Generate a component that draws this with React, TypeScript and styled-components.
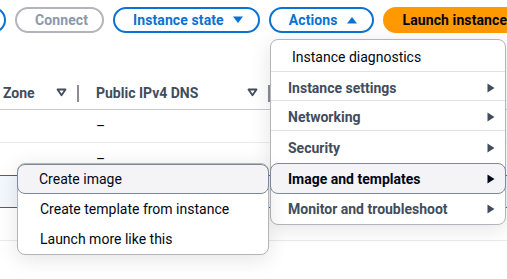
import React from "react";
import styled, { createGlobalStyle } from "styled-components";

const Global = createGlobalStyle`
  html, body { margin: 0; padding: 0; background: #ffffff; overflow: hidden; }
  body { font-family: Roboto, "Open Sans", "Noto Sans", sans-serif; font-size: 14px; color: #000716; }
  * { box-sizing: border-box; }
`;

const Page = styled.div`
  position: relative;
  width: 507px;
  height: 279px;
  overflow: hidden;
  background: #fff;
`;

const Toolbar = styled.div`
  display: flex;
  align-items: center;
  gap: 9px;
  height: 26px;
  margin: 7px 0 0 -28px;
  white-space: nowrap;
`;

const Btn = styled.button<{ $variant?: "normal" | "disabled" | "primary" }>`
  flex: none;
  display: inline-flex;
  align-items: center;
  gap: 8px;
  height: 26px;
  padding: 0 14px 0 18px;
  border-radius: 20px;
  border: 2px solid
    ${(p) => (p.$variant === "disabled" ? "#b4b4bb" : p.$variant === "primary" ? "#ff9900" : "#0972d3")};
  background: ${(p) => (p.$variant === "primary" ? "#ff9900" : "#ffffff")};
  color: ${(p) => (p.$variant === "disabled" ? "#8d99a8" : p.$variant === "primary" ? "#000716" : "#0972d3")};
  font-family: inherit;
  font-weight: 700;
  font-size: 14px;
  letter-spacing: 0.1px;
  line-height: 1;
`;

const IconBtn = styled(Btn)`
  width: 34px;
  padding: 0;
  justify-content: center;
`;

const Caret = ({ up }: { up?: boolean }) => (
  <svg width="12" height="8" viewBox="0 0 12 8">
    <path d={up ? "M1 7.5 L6 1 L11 7.5 Z" : "M1 0.5 L11 0.5 L6 7 Z"} fill="currentColor" />
  </svg>
);

const Table = styled.div`
  margin-top: 43px;
  display: flex;
  flex-direction: column;
`;

const HeaderRow = styled.div`
  display: grid;
  grid-template-columns: 77px 191px 1fr;
  height: 34px;
  align-items: center;
  border-bottom: 1px solid #c6c6cd;
`;

const HeadCell = styled.div<{ $sep?: boolean }>`
  display: flex;
  align-items: center;
  justify-content: space-between;
  height: 100%;
  padding: 0 10px 0 ${(p) => (p.$sep ? "17px" : "3px")};
  border-left: ${(p) => (p.$sep ? "2px solid #8c8c94" : "none")};
  font-weight: 700;
  color: #414d5c;
  ${(p) => (p.$sep ? "border-image: linear-gradient(to bottom, transparent 9px, #8c8c94 9px, #8c8c94 25px, transparent 25px) 1;" : "")}
`;

const Filter = () => (
  <svg width="11" height="9" viewBox="0 0 11 9">
    <path d="M1.5 1.5 H9.5 L5.5 7.3 Z" fill="none" stroke="#414d5c" strokeWidth="1.8" strokeLinejoin="round" />
  </svg>
);

const Row = styled.div<{ $selected?: boolean }>`
  display: grid;
  grid-template-columns: 77px 191px 1fr;
  height: 33px;
  align-items: center;
  background: ${(p) => (p.$selected ? "#f2f8fd" : "#fff")};
  border-bottom: 1px solid ${(p) => (p.$selected ? "#0972d3" : "#e9ebed")};
  ${(p) => (p.$selected ? "border-top: 1px solid #0972d3; margin-top: -1px;" : "")}
`;

const Cell = styled.div`
  padding-left: 19px;
  color: #000716;
`;

const Menu = styled.div<{ $left: number; $top: number; $width: number }>`
  position: absolute;
  left: ${(p) => p.$left}px;
  top: ${(p) => p.$top}px;
  width: ${(p) => p.$width}px;
  background: #fff;
  border: 1px solid #b4b4bb;
  border-radius: 8px;
  box-shadow: 0 4px 20px 1px rgba(0, 7, 22, 0.1);
  display: flex;
  flex-direction: column;
`;

const Item = styled.div<{ $bold?: boolean; $active?: boolean; $h?: number; $indent?: number; $divider?: boolean }>`
  position: relative;
  display: flex;
  align-items: center;
  justify-content: space-between;
  height: ${(p) => p.$h ?? 30}px;
  padding: 0 10px 0 ${(p) => p.$indent ?? 17}px;
  margin: 0 -1px;
  font-weight: ${(p) => (p.$bold ? 700 : 400)};
  color: ${(p) => (p.$active ? "#000716" : p.$bold ? "#414d5c" : "#000716")};
  background: ${(p) => (p.$active ? "#f4f4f6" : "transparent")};
  border: 1px solid ${(p) => (p.$active ? "#7d8998" : "transparent")};
  border-radius: ${(p) => (p.$active ? "8px" : "0")};
  box-shadow: ${(p) => (p.$divider ? "inset 0 -1px 0 #e0e2e5" : "none")};
  z-index: ${(p) => (p.$active ? 1 : 0)};
`;

const Arrow = ({ dark }: { dark?: boolean }) => (
  <svg width="8" height="10" viewBox="0 0 8 10">
    <path d="M0.5 0.5 L7.5 5 L0.5 9.5 Z" fill={dark ? "#000716" : "#414d5c"} />
  </svg>
);

const RefreshIcon = () => (
  <svg width="16" height="16" viewBox="0 0 16 16">
    <path d="M10 5h3V2M12.9 5A6 6 0 1 0 14 8" fill="none" stroke="#0972d3" strokeWidth="2" />
  </svg>
);

export default function App() {
  return (
    <Page>
      <Global />
      <Toolbar>
        <IconBtn>
          <RefreshIcon />
        </IconBtn>
        <Btn $variant="disabled">Connect</Btn>
        <Btn>
          Instance state <Caret />
        </Btn>
        <Btn>
          Actions <Caret up />
        </Btn>
        <Btn $variant="primary">Launch instance</Btn>
      </Toolbar>
      <Table>
        <HeaderRow>
          <HeadCell>
            Zone <Filter />
          </HeadCell>
          <HeadCell $sep>
            Public IPv4 DNS <Filter />
          </HeadCell>
          <HeadCell $sep />
        </HeaderRow>
        <Row>
          <div />
          <Cell>–</Cell>
          <div />
        </Row>
        <Row>
          <div />
          <Cell>–</Cell>
          <div />
        </Row>
        <Row $selected>
          <div />
          <Cell />
          <div />
        </Row>
        <Row>
          <div />
          <Cell />
          <div />
        </Row>
      </Table>

      <Menu $left={270} $top={39} $width={236}>
        <Item $h={33} $indent={21} $divider>
          Instance diagnostics
        </Item>
        <Item $bold $h={29} $divider>
          Instance settings <Arrow />
        </Item>
        <Item $bold $h={30} $divider>
          Networking <Arrow />
        </Item>
        <Item $bold $h={31}>
          Security <Arrow />
        </Item>
        <Item $bold $active $h={31}>
          Image and templates <Arrow dark />
        </Item>
        <Item $bold $h={30}>
          Monitor and troubleshoot <Arrow />
        </Item>
      </Menu>

      <Menu $left={17} $top={163} $width={252}>
        <Item $active $h={30} $indent={21}>
          Create image
        </Item>
        <Item $h={30} $indent={22}>
          Create template from instance
        </Item>
        <Item $h={30} $indent={22}>
          Launch more like this
        </Item>
      </Menu>
    </Page>
  );
}
